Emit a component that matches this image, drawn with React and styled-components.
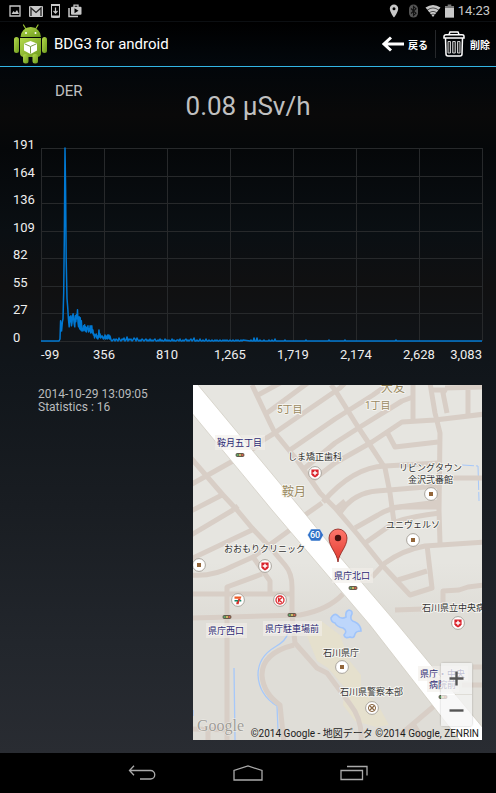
import React from "react";
import styled, {createGlobalStyle} from "styled-components";

const GlobalStyle = createGlobalStyle`
  * {
    box-sizing: border-box;
  }
  body {
    margin: 0;
    background: #000;
    color: #fff;
    font-family: Roboto, "Noto Sans CJK JP", sans-serif;
  }
  button {
    font: inherit;
    color: inherit;
    padding: 0;
    border: 0;
    background: none;
    cursor: pointer;
  }
  svg {
    display: block;
  }
`;

const Screen = styled.div`
  min-height: 100vh;
  display: flex;
  flex-direction: column;
`;

const StatusBar = styled.div`
  height: 21px;
  padding: 0 6px 0 9px;
  display: flex;
  align-items: center;
  justify-content: space-between;
  color: #c8c8c8;
`;

const StatusGroup = styled.div`
  display: flex;
  align-items: center;
  gap: ${props => props.$gap}px;
`;

const Clock = styled.span`
  font-size: 13px;
  line-height: 20px;
`;

const ActionBar = styled.header`
  height: 46px;
  padding: 0 6px 0 14px;
  display: flex;
  align-items: center;
  border-top: 1px solid #0c0f12;
  border-bottom: 1px solid #33b5e5;
  background: linear-gradient(#000, #03080d);
`;

const Title = styled.h1`
  flex: 1;
  margin: 0 0 0 7px;
  font-size: 15px;
  line-height: 20px;
  font-weight: 400;
`;

const ActionButton = styled.button`
  height: 28px;
  display: flex;
  align-items: center;
  gap: ${props => props.$gap}px;

  span {
    font-size: 10px;
    font-weight: 700;
  }

  & + & {
    margin-left: 7px;
    padding-left: 7px;
    border-left: 1px solid #26282b;
  }
`;

const Content = styled.main`
  flex: 1;
  background: linear-gradient(#02060a 0%, #090909 7%, #050709 12%, #0a0f13 24%, #101011 32%, #10151a 43%, #191d22 64%, #22262c 84%, #292c32 100%);
`;

const Readout = styled.section`
  display: grid;
  grid-template-columns: 1fr auto 1fr;
  height: 63px;
  padding-top: 14px;
  color: #c0c0c0;
`;

const ReadoutLabel = styled.span`
  padding-left: 55px;
  font-size: 15px;
  line-height: 20px;
`;

const ReadoutValue = styled.span`
  padding-top: 8px;
  font-size: 26px;
  line-height: 34px;
`;

const ChartSvg = styled.svg`
  width: 100%;
  height: auto;

  text {
    font-size: 13px;
    fill: #eee;
  }
`;

const Details = styled.section`
  display: flex;
  align-items: flex-start;
  padding: 15px 14px 13px 38px;
`;

const Info = styled.p`
  flex: 0 0 155px;
  margin: 3px 0 0;
  color: #b9bbbd;
  font-size: 12px;
  line-height: 13px;
`;

const MapFrame = styled.div`
  flex: 1;
  position: relative;
`;

const MapSvg = styled.svg`
  width: 100%;
  height: auto;
  overflow: hidden;
`;

const MapText = styled.text`
  font-size: ${props => props.$size || 9}px;
  fill: ${props => props.$color || "#333"};
  stroke: #f4f3ef;
  stroke-width: 2px;
  stroke-linejoin: round;
  paint-order: stroke;
`;

const Logo = styled.text`
  font-family: "Liberation Serif", serif;
  font-size: 16px;
  fill: #9f9d98;
  stroke: #efeeea;
  stroke-width: 1px;
  paint-order: stroke;
`;

const Attribution = styled.text`
  font-size: 10px;
  fill: #1c1c1c;
`;

const ZoomControls = styled.div`
  position: absolute;
  right: 10px;
  bottom: 14px;
  display: grid;
  gap: 1px;
  border-radius: 2px;
  box-shadow: 0 0 2px rgba(0, 0, 0, 0.3);
`;

const ZoomButton = styled.button`
  display: grid;
  place-items: center;
  width: 31px;
  height: 31px;
  background: rgba(246, 246, 246, 0.75);
`;

const NavBar = styled.nav`
  height: 40px;
  display: flex;
  justify-content: center;
  background: #000;
`;

const NavButton = styled.button`
  width: 106px;
  display: grid;
  place-items: center;
`;

const PLOT = {left: 41, top: 18, width: 441, height: 193, max: 191};
const Y_TICKS = ["191", "164", "136", "109", "82", "55", "27", "0"];
const X_TICKS = ["-99", "356", "810", "1,265", "1,719", "2,174", "2,628", "3,083"];

// [offset along the axis, counts]
const PEAK = [
  [0, 0], [18, 0], [19, 2], [19.6, 20], [20.6, 10], [21.4, 19], [22, 22], [22.7, 48], [23.3, 100],
  [24, 191], [24.6, 150], [25.2, 80], [26, 42], [26.8, 32], [27.4, 22], [28.2, 14],
];
const SHOULDER = [
  24, 19, 25, 15, 18, 24, 27, 22, 17, 14, 25, 19, 26, 22, 31, 18, 14, 24, 12, 23, 11, 20, 10, 12, 10,
  15, 11, 16, 10, 14, 9, 13, 12, 15, 9, 12, 10, 15, 8, 12, 15, 8, 11, 6, 7, 3, 6, 5, 7, 3,
  5, 2, 4, 11, 4, 7, 3, 5, 4, 5, 3, 2, 4, 3, 6, 2, 5, 3, 2, 6, 3, 6, 2, 5, 3, 1,
];
const TAIL = [
  0, 1, 2, 0, 2, 1, 0, 3, 1, 0, 2, 1, 3, 0, 1, 4, 0, 2, 1, 2, 0, 1, 3, 2, 0, 3, 1, 0, 1, 0, 2, 1, 0,
  1, 2, 0, 1, 0, 2, 0, 1, 0, 1, 2, 0, 0, 1, 0, 2, 0, 1, 0, 0, 2, 0, 1, 0, 1, 0, 0, 2, 0, 1, 0, 0, 1,
  1, 0, 2, 0, 0, 1, 0, 1, 2, 0, 1, 0, 1, 2, 0, 1, 3, 0, 0, 1, 0, 0, 2, 0, 0, 1, 0, 0, 2, 0, 0, 1, 0,
  0, 1, 0, 0, 1, 0, 1, 0, 0, 1, 0, 0, 1, 0, 1, 0, 1, 0, 0, 1, 0, 0, 1, 0, 0, 1, 0, 1, 0, 0, 1, 0, 1,
];
const BLIPS = [[210, 1], [213, 3], [216, 3], [219, 1], [223, 1], [228, 1], [231, 1], [234, 2], [244, 1], [265, 1], [288, 1], [304, 1], [355, 1]];

const spectrum = [
  ...PEAK,
  ...SHOULDER.map((count, i) => [28.8 + i * 0.55, count]),
  ...TAIL.map((count, i) => [71 + i, count]),
  ...BLIPS.flatMap(([x, count]) => [[x - 0.8, 0], [x, count], [x + 0.8, 0]]),
  [PLOT.width, 0],
];

const Chart = () => {
  const bottom = PLOT.top + PLOT.height;
  const right = PLOT.left + PLOT.width;
  const points = spectrum
    .map(([x, count]) => `${PLOT.left + x},${bottom - (count / PLOT.max) * PLOT.height}`)
    .join(" ");
  return (
    <ChartSvg viewBox="0 0 496 240" role="img" aria-label="Spectrum">
      <g stroke="#27292b" strokeWidth="1">
        {Y_TICKS.map((tick, i) => {
          const y = PLOT.top + Math.round((i * PLOT.height) / 7) + 0.5;
          return <line key={tick} x1={PLOT.left} x2={right} y1={y} y2={y}/>;
        })}
        {X_TICKS.map((tick, i) => {
          const x = PLOT.left + i * 63 + 0.5;
          return <line key={tick} x1={x} x2={x} y1={PLOT.top} y2={bottom}/>;
        })}
      </g>
      {Y_TICKS.map((tick, i) => (
        <text key={tick} x="13" y={19 + Math.round((i * PLOT.height) / 7)}>{tick}</text>
      ))}
      {X_TICKS.map((tick, i) => {
        const anchor = i === 0 ? "start" : i === 7 ? "end" : "middle";
        return <text key={tick} x={PLOT.left + i * 63} y="229" textAnchor={anchor}>{tick}</text>;
      })}
      <polyline points={points} fill="none" stroke="#0078d2" strokeWidth="1.5" strokeLinejoin="round"/>
    </ChartSvg>
  );
};

const STREETS = [
  "M59 0L77 38L82 48L104 75L127 108L142 123L165 150L189 180L217 210L239 203L234 160",
  "M65 10L89 -3",
  "M74 28L116 -3",
  "M62 60L80 49L112 27L147 3L152 -2",
  "M97 65L142 34L180 10L197 -2",
  "M112 83L142 58L167 42L209 16L220 12",
  "M120 95L142 78L179 57L209 37L242 35L292 29",
  "M142 5L165 42L177 60L192 83L197 108L201 137",
  "M138 0L142 5",
  "M220 -5V34",
  "M237 -2L242 28L247 48L246 125L247 158",
  "M237 5H252L250 8L254 28M252 3L292 2M275 2V30",
  "M194 47L202 62L245 57",
  "M130 117Q160 82 192 81L245 78",
  "M147 128Q160 108 184 106L245 101",
  "M197 123L246 117M246 93H292",
  "M162 143L185 130Q196 123 209 122H246",
  "M172 158L202 137Q220 131 247 128",
  "M179 192L192 178Q210 165 232 161L292 157",
  "M205 195L234 186",
  "M202 225L292 222M250 224V206L266 205L275 202L292 200",
  "M-2 73L30 110L44 125L59 143L75 160L92 180Q99 188 99 202V230L102 258L124 283L134 288L157 319Q170 335 168 358",
  "M-1 99L47 72L66 60",
  "M-2 126L29 110",
  "M-2 150L40 125M40 125L45 121",
  "M-2 174L59 145",
  "M-2 190Q20 192 40 181L60 172L97 145L103 139",
  "M34 358V202L69 189",
  "M60 172L77 196V209",
  "M-2 209H99",
  "M-2 233L107 230Q135 225 150 209",
  "M112 130L129 118",
  "M101 260Q69 268 69 290Q70 308 87 320L91 358",
  "M-2 344L37 345M15 345V358",
  "M207 350L247 316M219 337L232 358",
  "M280 282H292M269 300H292",
  "M144 123L152 116",
];

const MARKERS = [
  {kind: "clinic", x: 122, y: 88},
  {kind: "clinic", x: 72, y: 181},
  {kind: "clinic", x: 265, y: 238},
  {kind: "place", x: 238, y: 109},
  {kind: "place", x: 220, y: 155},
  {kind: "place", x: 6, y: 180},
  {kind: "place", x: 149, y: 282},
  {kind: "police", x: 179, y: 323},
  {kind: "seven", x: 45, y: 215},
  {kind: "circleK", x: 87, y: 215},
];

const SIGNALS = [[47, 70], [34, 232], [99, 230], [160, 203], [250, 312]];

const AREAS = [
  {text: "大友", x: 188, y: 7, size: 12},
  {text: "5丁目", x: 84, y: 28, size: 10},
  {text: "1丁目", x: 172, y: 24, size: 10},
  {text: "鞍月", x: 89, y: 111, size: 12},
];

const CROSSINGS = [
  {text: "鞍月五丁目", x: 24, y: 61, width: 46},
  {text: "県庁北口", x: 141, y: 194, width: 37},
  {text: "県庁西口", x: 15, y: 249, width: 37},
  {text: "県庁駐車場前", x: 72, y: 247, width: 55},
  {text: "県庁・中央", x: 227, y: 292, width: 46},
  {text: "病院前", x: 236, y: 303, width: 28},
];

const PLACES = [
  {text: "しま矯正歯科", x: 95, y: 75},
  {text: "リビングタウン", x: 206, y: 86},
  {text: "金沢弐番館", x: 215, y: 98},
  {text: "ユニヴェルソ", x: 193, y: 143},
  {text: "おおもりクリニック", x: 31, y: 167},
  {text: "石川県立中央病", x: 229, y: 226},
  {text: "石川県庁", x: 130, y: 271},
  {text: "石川県警察本部", x: 147, y: 310},
];

const Marker = ({kind, x, y}) => (
  <g transform={`translate(${x} ${y})`}>
    <circle r="6.4" fill="#fff" stroke="#a9a49c" strokeWidth="1"/>
    {kind === "clinic" && <>
      <path d="M-3.6 -3.6H3.6V1.2Q3.2 3 0 4.4Q-3.2 3 -3.6 1.2Z" fill="#d9222b"/>
      <path d="M0 -2.3V2.3M-2.3 0H2.3" stroke="#fff" strokeWidth="1.4"/>
    </>}
    {kind === "place" && <rect x="-2" y="-2" width="4" height="4" fill="#93663a"/>}
    {kind === "police" && <>
      <circle r="3.6" fill="none" stroke="#8b6844" strokeWidth="1"/>
      <path d="M-2.5 -2.5L2.5 2.5M2.5 -2.5L-2.5 2.5" stroke="#8b6844" strokeWidth="1.3"/>
    </>}
    {kind === "seven" && <>
      <path d="M-3.5 -3.5H3.5L2.6 -1.3H-3.5Z" fill="#ee5a24"/>
      <path d="M3 -1.3Q0.600 1 0.600 4.3H-1.800Q-1.600 1.500 0.500 -1.3Z" fill="#d9322b"/>
      <path d="M-3.500 0.700H0M1.500 0.700H3.300" stroke="#16896c" strokeWidth="1.600"/>
    </>}
    {kind === "circleK" && <>
      <circle r="4" fill="none" stroke="#dc2a30" strokeWidth="1.3"/>
      <path d="M-1.4 -2.6V2.6M2 -2.5L-1 0L2 2.5" fill="none" stroke="#dc2a30" strokeWidth="1.4"/>
    </>}
  </g>
);

const AreaMap = () => (
  <MapSvg viewBox="0 0 289 355" role="img" aria-label="Map">
    <defs>
      <linearGradient id="land" x1="0" y1="0" x2="0" y2="1">
        <stop offset="0.5" stopColor="#e6e5e0"/>
        <stop offset="0.65" stopColor="#dfddd7"/>
      </linearGradient>
      <linearGradient id="pin" x1="0" y1="0" x2="0" y2="1">
        <stop offset="0" stopColor="#ff776b"/>
        <stop offset="1" stopColor="#e03a30"/>
      </linearGradient>
    </defs>
    <rect width="289" height="355" fill="url(#land)"/>
    <path d="M112 246L127 235L147 250L156 275L168 290V305L184 318L196 340L183 342L162 336L150 320L152 303L135 283L124 276Z" fill="#e5e0cd"/>
    <path d="M138 233Q141 228 144 230Q148 235 153 232Q152 226 156 225Q161 226 158 231Q157 236 162 237Q168 240 168 246Q163 246 162 249Q161 254 157 252Q152 254 151 250Q155 246 150 243Q144 242 142 238Q138 237 138 233Z" fill="#bdd6fb" stroke="#a0c4fa" strokeWidth="1.600"/>
    <path d="M95 248Q93 256 82 262Q65 272 65 290Q66 310 84 321L85 345M41 283L42 355M0 325V331" fill="none" stroke="#a6c8fa" strokeWidth="1.3"/>
    <path d="M269 80L285 81L286 116" fill="none" stroke="#a6c8fa" strokeWidth="1" strokeDasharray="12 2"/>
    <g fill="none" stroke="#d8cec6" strokeWidth="5" strokeLinejoin="round">
      {STREETS.map(d => <path key={d} d={d}/>)}
    </g>
    <path d="M-2 -7L5 0L109 125L147 172L205 240L295 349V362H272L177 240L79 125L-2 27Z" fill="#fff" stroke="#cfcabf" strokeWidth="0.7"/>
    {CROSSINGS.map(({text, x, y, width}) => (
      <g key={text}>
        <rect x={x - 2} y={y - 11} width={width + 4} height="15" fill="#f1eeea" opacity="0.6"/>
        <MapText x={x} y={y} $color="#2e2a74">{text}</MapText>
      </g>
    ))}
    {AREAS.map(({text, x, y, size}) => (
      <MapText key={text} x={x} y={y} $size={size} $color="#9a8a62">{text}</MapText>
    ))}
    {PLACES.map(({text, x, y}) => <MapText key={text} x={x} y={y}>{text}</MapText>)}
    {SIGNALS.map(([x, y]) => (
      <g key={x} transform={`translate(${x} ${y})`}>
        <rect x="-4.5" y="-2" width="9" height="4" rx="2" fill="#635b4c"/>
        <circle cx="-2.4" r="1.1" fill="#5dae70"/>
        <circle r="1.1" fill="#e3cf68"/>
        <circle cx="2.4" r="1.1" fill="#d9614f"/>
      </g>
    ))}
    {MARKERS.map(marker => <Marker key={`${marker.x}-${marker.y}`} {...marker}/>)}
    <path d="M118 144H127L130.500 150L127 156H118L114.500 150Z" fill="#2f71c8" stroke="#fff" strokeWidth="0.5"/>
    <text x="122" y="153" textAnchor="middle" fontSize="9" fontWeight="500" fill="#fff">60</text>
    <path d="M145 177C144 168 136 162 136 153A9 9 0 0 1 154 153C154 162 146 168 145 177Z" fill="url(#pin)" stroke="#8c211b" strokeWidth="0.8"/>
    <circle cx="145" cy="153" r="3.2" fill="#47110e"/>
    <Logo x="4" y="346">Google</Logo>
    <Attribution x="286" y="352" textAnchor="end">©2014 Google - 地図データ ©2014 Google, ZENRIN</Attribution>
  </MapSvg>
);

const AndroidIcon = () => (
  <svg width="33" height="40" viewBox="0 0 33 40">
    <defs>
      <linearGradient id="droid" x1="0" y1="0" x2="1" y2="1">
        <stop offset="0" stopColor="#b4d94c"/>
        <stop offset="1" stopColor="#6c9a1c"/>
      </linearGradient>
    </defs>
    <path d="M9.500 1L12.500 6M24 1L21 6" stroke="#9cc536" strokeWidth="1.2" strokeLinecap="round"/>
    <g fill="url(#droid)">
      <path d="M6.500 13A10.200 10 0 0 1 27 13Z"/>
      <rect x="0" y="13" width="5" height="16" rx="2.500"/>
      <rect x="28" y="13" width="5" height="16" rx="2.500"/>
      <path d="M6 14H27V29Q27 33 23 33H10Q6 33 6 29Z"/>
      <rect x="9" y="30" width="5.500" height="9.500" rx="2.500"/>
      <rect x="18.500" y="30" width="5.500" height="9.500" rx="2.500"/>
    </g>
    <circle cx="12" cy="9" r="1" fill="#fff"/>
    <circle cx="21.500" cy="9" r="1" fill="#fff"/>
    <path d="M16.500 17L23 19.500V26.500L16.500 30L10 26.500V19.500Z" fill="#fff"/>
    <path d="M10.500 19.800L16.500 22.500L22.500 19.800M16.500 22.500V29.500" fill="none" stroke="#7b9a48" strokeWidth="1"/>
  </svg>
);

const StatusIcons = () => (
  <StatusGroup $gap={8}>
    <svg width="12" height="12" viewBox="0 0 12 12">
      <path d="M1 1H11V11H1Z" fill="none" stroke="currentColor" strokeWidth="1.300"/>
      <path d="M2.500 9L4.500 6L6 7.500L8 5L10 9Z" fill="currentColor"/>
    </svg>
    <svg width="14" height="12" viewBox="0 0 14 12">
      <rect y="1" width="14" height="11" rx="1" fill="currentColor"/>
      <path d="M2 11V3L7 7.500L12 3V11" fill="none" stroke="#222" strokeWidth="1.300"/>
    </svg>
    <svg width="9" height="14" viewBox="0 0 9 14">
      <rect x="0.500" y="0.500" width="8" height="13" rx="1" fill="none" stroke="currentColor"/>
      <path d="M0 1H9M0 12.500H9" stroke="currentColor" strokeWidth="1.800"/>
      <path d="M4.500 3.500V9M2.500 7L4.500 9.200L6.500 7" fill="none" stroke="currentColor" strokeWidth="1.200"/>
    </svg>
    <svg width="14" height="14" viewBox="0 0 14 14">
      <path d="M1 4V12.500H10" fill="none" stroke="currentColor" strokeWidth="1.500"/>
      <path d="M6 3V1.200H10V3" fill="none" stroke="currentColor" strokeWidth="1.300"/>
      <rect x="3" y="2.800" width="10.500" height="8" rx="1" fill="currentColor"/>
      <path d="M6.500 4.300V9.300L10.500 6.800Z" fill="#000"/>
    </svg>
  </StatusGroup>
);

const SystemIcons = () => (
  <StatusGroup $gap={4}>
    <svg width="10" height="14" viewBox="0 0 10 14">
      <path fillRule="evenodd" d="M5 0.500A4.200 4.200 0 0 1 9.200 4.700C9.200 8 5 13.500 5 13.500S0.800 8 0.800 4.700A4.200 4.200 0 0 1 5 0.500ZM5 3.200A1.500 1.500 0 1 0 5 6.200A1.500 1.500 0 1 0 5 3.200Z" fill="currentColor"/>
    </svg>
    <svg width="18" height="14" viewBox="0 0 18 14">
      <rect x="6" y="0.500" width="9" height="13" rx="4.500" fill="#555"/>
      <path d="M8 4.500L13 9.300L10.500 11.500V2.500L13 4.700L8 9.500" fill="none" stroke="#111" strokeWidth="1.100"/>
    </svg>
    <svg width="16" height="14" viewBox="0 0 16 14">
      <path d="M8 13L0.500 3.600Q8 -1.600 15.500 3.600Z" fill="currentColor"/>
      <path d="M2 6.300Q8 1.600 14 6.300M4 9Q8 5.800 12 9M5.500 11Q8 9 10.500 11" fill="none" stroke="#000" strokeWidth="0.600"/>
    </svg>
    <svg width="9" height="14" viewBox="0 0 9 14">
      <path d="M2.700 0.500H6.300V2H9V13.500H0V2H2.700Z" fill="#777"/>
      <rect y="4" width="9" height="9.500" fill="currentColor"/>
    </svg>
    <Clock>14:23</Clock>
  </StatusGroup>
);

const App = () => (
  <Screen>
    <GlobalStyle/>
    <StatusBar>
      <StatusIcons/>
      <SystemIcons/>
    </StatusBar>
    <ActionBar>
      <AndroidIcon/>
      <Title>BDG3 for android</Title>
      <ActionButton $gap={3}>
        <svg width="23" height="18" viewBox="0 0 23 18">
          <path d="M22 9H3M9 2.500L2 9L9 15.500" fill="none" stroke="#fff" strokeWidth="3"/>
        </svg>
        <span>戻る</span>
      </ActionButton>
      <ActionButton $gap={5}>
        <svg width="22" height="26" viewBox="0 0 22 26">
          <g fill="none" stroke="#fff" strokeWidth="1.500">
            <path d="M6 3.500L7 1H15L16 3.500"/>
            <path d="M1 7V5.500Q1 3.800 3 3.800H19Q21 3.800 21 5.500V7Z"/>
            <path d="M2.500 7L3 23Q3 25 5 25H17Q19 25 19 23L19.500 7"/>
          </g>
          <path d="M5 10.500H7.500V22H5ZM9.700 10.500H12.300V22H9.700ZM14.500 10.500H17V22H14.500Z" fill="#333" stroke="#ddd" strokeWidth="0.900"/>
        </svg>
        <span>削除</span>
      </ActionButton>
    </ActionBar>
    <Content>
      <Readout>
        <ReadoutLabel>DER</ReadoutLabel>
        <ReadoutValue>0.08 µSv/h</ReadoutValue>
      </Readout>
      <Chart/>
      <Details>
        <Info>
          2014-10-29 13:09:05<br/>
          Statistics : 16
        </Info>
        <MapFrame>
          <AreaMap/>
          <ZoomControls>
            <ZoomButton aria-label="Zoom in">
              <svg width="15" height="15" viewBox="0 0 15 15">
                <path d="M7.500 0.500V14.500M0.500 7.500H14.500" stroke="#555" strokeWidth="2.400"/>
              </svg>
            </ZoomButton>
            <ZoomButton aria-label="Zoom out">
              <svg width="15" height="15" viewBox="0 0 15 15">
                <path d="M0.500 7.500H14.500" stroke="#555" strokeWidth="2.400"/>
              </svg>
            </ZoomButton>
          </ZoomControls>
        </MapFrame>
      </Details>
    </Content>
    <NavBar>
      <NavButton aria-label="Back">
        <svg width="28" height="16" viewBox="0 0 28 16" fill="none" stroke="#aaa" strokeWidth="1.300">
          <path d="M6 0.800L1.500 5.500L6 10.200M1.500 5.500H22.500A4 4 0 0 1 22.500 14H12"/>
        </svg>
      </NavButton>
      <NavButton aria-label="Home">
        <svg width="30" height="16" viewBox="0 0 30 16" fill="none" stroke="#aaa" strokeWidth="1.300">
          <path d="M1 15V5.500L15 1L29 5.500V15Z"/>
        </svg>
      </NavButton>
      <NavButton aria-label="Recent apps">
        <svg width="28" height="16" viewBox="0 0 28 16" fill="none" stroke="#aaa" strokeWidth="1.300">
          <path d="M1 5.500H22.500V14.500H1ZM7 1.500H27V10.500"/>
        </svg>
      </NavButton>
    </NavBar>
  </Screen>
);

export default App;
